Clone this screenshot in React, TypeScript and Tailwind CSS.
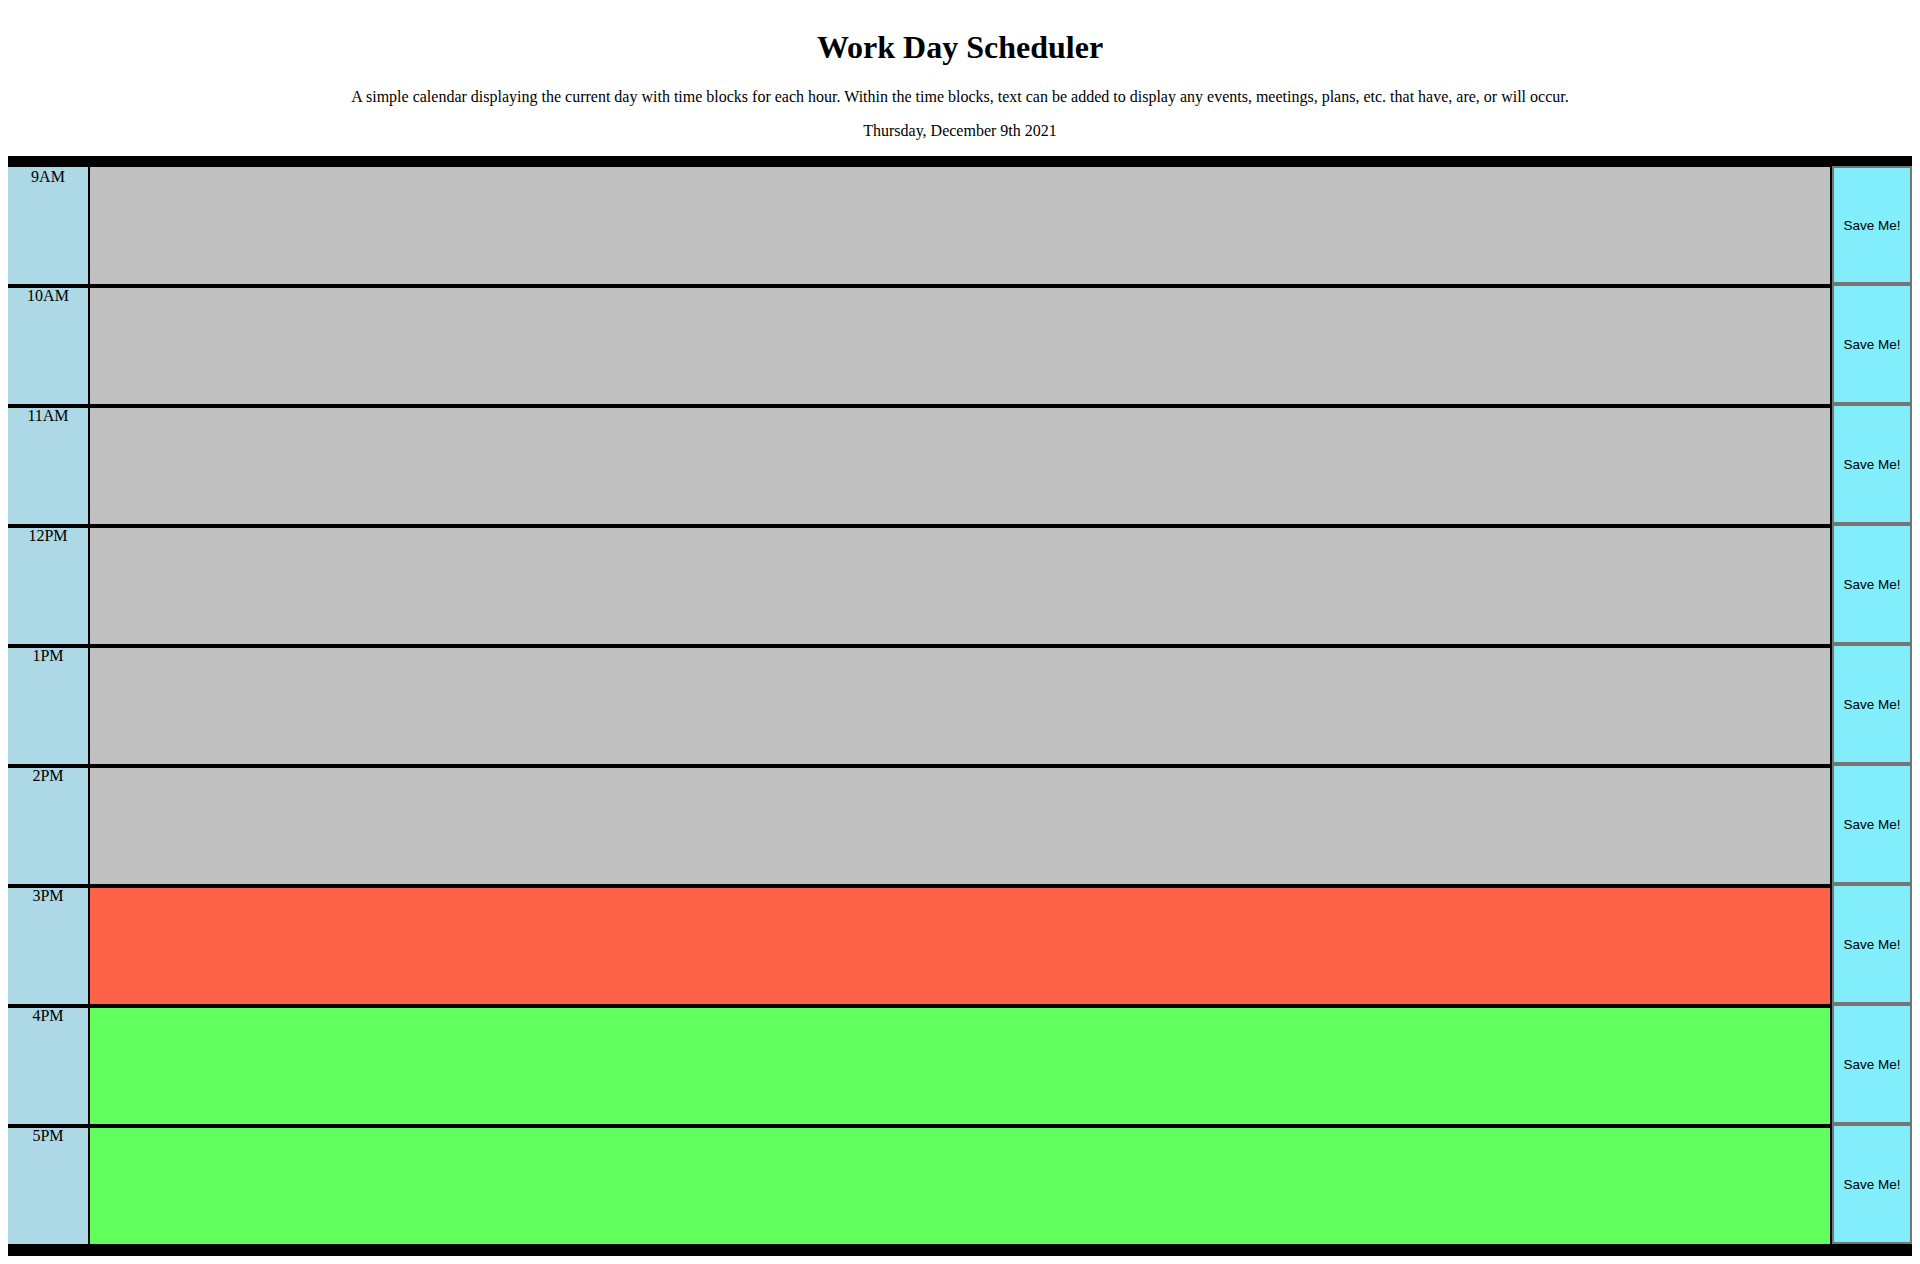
import React from "react";

const hours = [
  { label: "9AM", state: "past" },
  { label: "10AM", state: "past" },
  { label: "11AM", state: "past" },
  { label: "12PM", state: "past" },
  { label: "1PM", state: "past" },
  { label: "2PM", state: "past" },
  { label: "3PM", state: "present" },
  { label: "4PM", state: "future" },
  { label: "5PM", state: "future" },
];

const stateBg: Record<string, string> = {
  past: "bg-[#c0c0c0]",
  present: "bg-[#ff6347]",
  future: "bg-[#60ff5e]",
};

const App = () => {
  return (
    <div className="p-2 font-['Liberation_Serif','Times_New_Roman',serif] text-black bg-white">
      {/* header */}
      <header className="text-center">
        <h1 className="mt-[21.44px] text-[32px] leading-[37px] font-bold">Work Day Scheduler</h1>
        <p className="mt-[21.44px] text-base leading-[18px]">
          A simple calendar displaying the current day with time blocks for each hour. Within the time blocks, text
          can be added to display any events, meetings, plans, etc. that have, are, or will occur.
        </p>
        <p className="mt-4 text-base leading-[18px]">Thursday, December 9th 2021</p>
      </header>

      {/* time blocks */}
      <div className="mt-4 border-t-[10px] border-b-[12px] border-black">
        {hours.map((h, i) => (
          <div key={h.label} className={i === 0 ? "flex h-[118px]" : "flex h-[120px]"}>
            <div
              className={
                i === 0
                  ? "flex flex-1 border-t border-black"
                  : "flex flex-1 border-t-4 border-black"
              }
            >
              <div
                className={
                  i === 0
                    ? "w-[80px] bg-[#add8e6] text-center text-base leading-[18px] pt-px"
                    : "w-[80px] bg-[#add8e6] text-center text-base leading-[16px]"
                }
              >
                {h.label}
              </div>
              <textarea
                className={`flex-1 resize-none border-x-2 border-black outline-none ${stateBg[h.state]}`}
              />
            </div>
            <button className="w-[80px] h-full bg-[#82eefc] border-2 border-[#767676] pt-0.5 font-['Liberation_Sans',Arial,sans-serif] text-[13.5px] text-black">
              Save Me!
            </button>
          </div>
        ))}
      </div>
    </div>
  );
};

export default App;
